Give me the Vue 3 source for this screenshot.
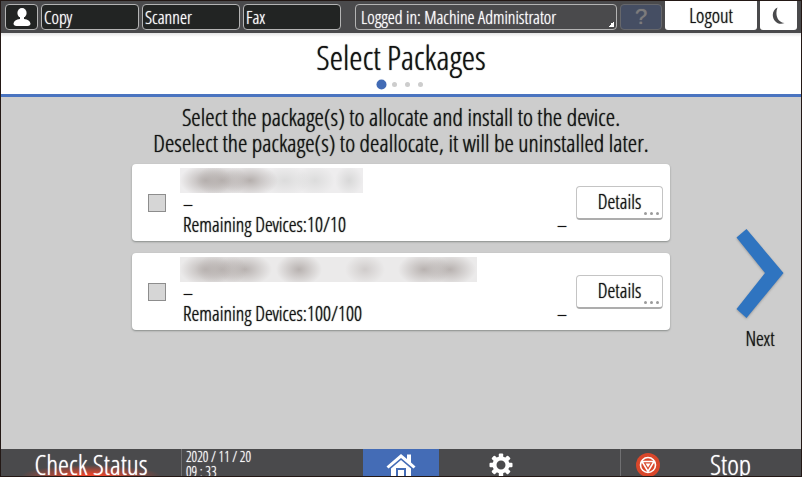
<template>
  <div class="panel">
    <nav class="top-bar">
      <button class="bar-button user-button" aria-label="User">
        <svg viewBox="0 0 18 18" width="18" height="18">
          <ellipse cx="9" cy="5" rx="4.6" ry="5" fill="#fff" />
          <path d="M7 8h4v3c4 .6 6 2 6.500 4.500 0 1.500-1 2.500-3 2.500h-11c-2 0-3-1-3-2.500C1 13 3 11.600 7 11z" fill="#fff" />
        </svg>
      </button>
      <button v-for="app in apps" :key="app" class="bar-button app-button">{{ app }}</button>
      <button class="bar-button login-button">Logged in: Machine Administrator</button>
      <button class="bar-button help-button" disabled>?</button>
      <button class="bar-button logout-button">Logout</button>
      <button class="bar-button sleep-button" aria-label="Sleep">
        <svg viewBox="0 0 14 18" width="14" height="18">
          <path d="M5.500 0.500C0 3 -.5 10 3 14c2.500 3 6.500 3.500 9.500 2C6 15.500 2.500 8 5.500 .5z" fill="#4a4a4c" />
        </svg>
      </button>
    </nav>

    <header class="page-header">
      <h1>Select Packages</h1>
      <div class="steps">
        <span v-for="n in 4" :key="n" class="step" :class="{ active: n === step }"></span>
      </div>
    </header>

    <main class="content">
      <section class="center">
        <p class="intro">
          Select the package(s) to allocate and install to the device.<br>
          Deselect the package(s) to deallocate, it will be uninstalled later.
        </p>
        <div v-for="item in packages" :key="item.id" class="card">
          <input v-model="item.selected" type="checkbox" class="check" :aria-label="item.remaining">
          <div class="info">
            <div class="masked" :class="item.id"></div>
            <div class="line">–</div>
            <div class="line">Remaining Devices:{{ item.remaining }}</div>
          </div>
          <span class="status">–</span>
          <button class="details">Details<span class="more"><i></i><i></i><i></i></span></button>
        </div>
      </section>
      <button class="next" @click="nextStep">
        <svg viewBox="0 0 48 92" width="48" height="92">
          <path d="M0.500 9.500L10.500 1L47.500 45L10.500 90L0.500 81L29 45z" fill="#2f74c0" />
        </svg>
        Next
      </button>
    </main>

    <footer class="bottom-bar">
      <button class="check-status">Check Status</button>
      <div class="clock">2020 / 11 / 20<br>09 : 33</div>
      <button class="home" aria-label="Home">
        <svg viewBox="0 0 30 24" width="30" height="24">
          <path d="M15 1L0.500 13.500L2.500 15.500L15 5L27.500 15.500L29.500 13.500L25 9.500V1.500H21V6z" fill="#fff" />
          <path d="M15 7L5 15.500V24H10V15H20V24H25V15.500z" fill="#fff" />
          <path d="M12 17H18V24H12z" fill="#fff" />
        </svg>
      </button>
      <button class="settings" aria-label="Settings">
        <svg viewBox="-12 -12 24 24" width="24" height="24">
          <g fill="#fff">
            <rect v-for="a in 8" :key="a" x="-2.200" y="-11.500" width="4.400" height="6" rx="1" :transform="`rotate(${a * 45})`" />
          </g>
          <circle r="6.500" fill="none" stroke="#fff" stroke-width="4" />
        </svg>
      </button>
      <button class="stop">
        <svg viewBox="-12 -12 24 24" width="24" height="24">
          <circle r="12" fill="#d9472b" />
          <circle r="7.500" fill="none" stroke="#fff" stroke-width="1.600" />
          <path d="M-6 -3.500H6L0 6.500z" fill="none" stroke="#fff" stroke-width="1.600" />
          <path d="M-2.500 -1.500H2.500L0 2.500z" fill="#fff" />
        </svg>
        <span>Stop</span>
      </button>
    </footer>
  </div>
</template>

<script setup>
import { reactive, ref } from 'vue'

const apps = ['Copy', 'Scanner', 'Fax']

const step = ref(1)

const packages = reactive([
  { id: 'short', remaining: '10/10', selected: false },
  { id: 'long', remaining: '100/100', selected: false },
])

const nextStep = () => {
  if (step.value < 4) step.value++
}
</script>

<style>
body {
  margin: 0;
}
</style>

<style scoped>
.panel {
  box-sizing: border-box;
  min-height: 100vh;
  display: flex;
  flex-direction: column;
  border: 1px solid #231815;
  background: #cdcdcd;
  color: #111;
  font-family: "Open Sans Condensed Light", "Open Sans Condensed", "Roboto Condensed", sans-serif;
  text-shadow: 0 0 1px currentColor;
}

button {
  margin: 0;
  padding: 0;
  border: none;
  background: none;
  color: inherit;
  font: inherit;
  text-shadow: inherit;
  cursor: pointer;
}

svg {
  display: block;
}

.top-bar {
  height: 32px;
  display: grid;
  grid-template-columns: 33px 1fr 1fr 1fr 8px 262px 42px 92px 37px;
  gap: 3px;
  padding: 0 4px;
  box-sizing: border-box;
  background: #4a4a4c;
}

.bar-button {
  height: 26px;
  margin-top: 3px;
  border: 1px solid #b4b4b4;
  border-radius: 4px;
  color: #fff;
  font-size: 18px;
  line-height: 22px;
  text-align: left;
  box-sizing: border-box;
}

.user-button,
.app-button {
  background: #222423;
}

.app-button {
  padding-left: 2px;
}

.user-button,
.sleep-button {
  display: flex;
  align-items: center;
  justify-content: center;
}

.login-button {
  grid-column: 6;
  padding-left: 5px;
  background: linear-gradient(135deg, transparent 50%, #fff 50%) no-repeat right 2px bottom 2px / 6px 6px;
}

.help-button {
  border-color: #66676b;
  background: #454e63;
  color: #7d7c7c;
  font-family: "Liberation Sans", sans-serif;
  font-size: 22px;
  text-align: center;
}

.logout-button,
.sleep-button {
  height: 29px;
  margin-top: 0;
  border: none;
  border-radius: 0 0 3px 3px;
  background: #fff;
  color: #111;
  font-size: 20px;
  line-height: 30px;
  text-align: center;
}

.page-header {
  height: 64px;
  box-sizing: border-box;
  border-bottom: 3px solid #4a74c0;
  background: linear-gradient(#e4e4e4, #fff 4px);
  text-align: center;
}

h1 {
  margin: 0;
  padding-top: 3px;
  font-size: 34px;
  font-weight: normal;
  line-height: 43px;
}

.steps {
  display: flex;
  align-items: center;
  justify-content: center;
  gap: 8px;
  height: 10px;
}

.step {
  width: 5px;
  height: 5px;
  border-radius: 50%;
  background: #cdcdcd;
}

.step.active {
  background: #426bb5;
  transform: scale(2);
}

.content {
  flex: 1;
  display: grid;
  grid-template-columns: 1fr 538px 1fr;
}

.center {
  grid-column: 2;
}

.intro {
  margin: 0;
  padding: 7px 0 8px;
  font-size: 24px;
  line-height: 26px;
  text-align: center;
  white-space: nowrap;
}

.card {
  display: flex;
  align-items: center;
  height: 77px;
  margin-bottom: 12px;
  padding: 0 7px 0 16px;
  box-sizing: border-box;
  border-radius: 4px;
  background: #fff;
  box-shadow: 0 1px 2px #888c8a;
}

.check {
  appearance: none;
  width: 18px;
  height: 18px;
  margin: 0 14px 0 0;
  border: 1px solid #8d8d8d;
  background: #d6d6d6;
}

.check:checked {
  background: #426bb5;
}

.info {
  flex: 1;
  align-self: flex-start;
  padding-top: 4px;
}

.masked {
  height: 25px;
}

.masked.short {
  width: 183px;
  background:
    radial-gradient(closest-side, #b5afad, transparent) 0 50% / 52px 130% no-repeat,
    radial-gradient(closest-side, #b5afad, transparent) 16px 50% / 52px 130% no-repeat,
    radial-gradient(closest-side, #b5afad, transparent) 42px 50% / 56px 130% no-repeat,
    radial-gradient(closest-side, #dcdcdc, transparent) 80px 50% / 50px 120% no-repeat,
    radial-gradient(closest-side, #dcdcdc, transparent) 115px 50% / 40px 120% no-repeat,
    radial-gradient(closest-side, #d8d8d8, transparent) 155px 50% / 28px 120% no-repeat,
    #eeedee;
}

.masked.long {
  width: 297px;
  background:
    radial-gradient(closest-side, #b8b2b0, transparent) 0 50% / 52px 130% no-repeat,
    radial-gradient(closest-side, #b8b2b0, transparent) 16px 50% / 52px 130% no-repeat,
    radial-gradient(closest-side, #b8b2b0, transparent) 38px 50% / 54px 130% no-repeat,
    radial-gradient(closest-side, #b8b2b0, transparent) 96px 50% / 46px 130% no-repeat,
    radial-gradient(closest-side, #d0cccb, transparent) 165px 50% / 40px 120% no-repeat,
    radial-gradient(closest-side, #b8b2b0, transparent) 218px 50% / 52px 130% no-repeat,
    radial-gradient(closest-side, #b8b2b0, transparent) 244px 50% / 52px 130% no-repeat,
    #ebeaea;
}

.line {
  padding-left: 3px;
  font-size: 20px;
  line-height: 21px;
}

.status {
  align-self: flex-end;
  padding: 0 9px 6px 0;
  font-size: 20px;
  line-height: 21px;
}

.details {
  position: relative;
  width: 87px;
  height: 34px;
  border: 1px solid #c4c4c4;
  border-bottom: 2px solid #adadad;
  border-radius: 4px;
  font-size: 20px;
  line-height: 28px;
}

.more {
  position: absolute;
  right: 3px;
  bottom: 3px;
  display: flex;
  gap: 3px;
}

.more i {
  width: 3px;
  height: 3px;
  border-radius: 50%;
  background: #9b9b9b;
}

.next {
  display: flex;
  flex-direction: column;
  align-items: center;
  align-self: start;
  justify-self: end;
  gap: 7px;
  margin: 131px 17px 0 0;
  font-size: 20px;
  line-height: 24px;
}

.next svg {
  filter: drop-shadow(0 1px 1px #999);
}

.bottom-bar {
  height: 27px;
  display: grid;
  grid-template-columns: 181px 1fr 76px 1fr 181px;
  overflow: hidden;
  background: #4a4a4c;
  color: #fff;
}

.check-status {
  height: 27px;
  border-right: 1px solid #707072;
  background: radial-gradient(70px 11px at 50% 100%, #e8452a 15%, transparent);
  font-size: 28px;
  line-height: 30px;
}

.clock {
  padding-left: 4px;
  font-size: 14px;
  line-height: 15px;
}

.home {
  display: flex;
  justify-content: center;
  padding-top: 4px;
  background: #446cb6;
}

.settings {
  display: flex;
  padding: 4px 0 0 50px;
}

.stop {
  display: flex;
  padding: 4px 0 0 15px;
  border-left: 1px solid #707072;
  font-size: 28px;
  line-height: 22px;
}

.stop span {
  margin-left: 50px;
}
</style>
